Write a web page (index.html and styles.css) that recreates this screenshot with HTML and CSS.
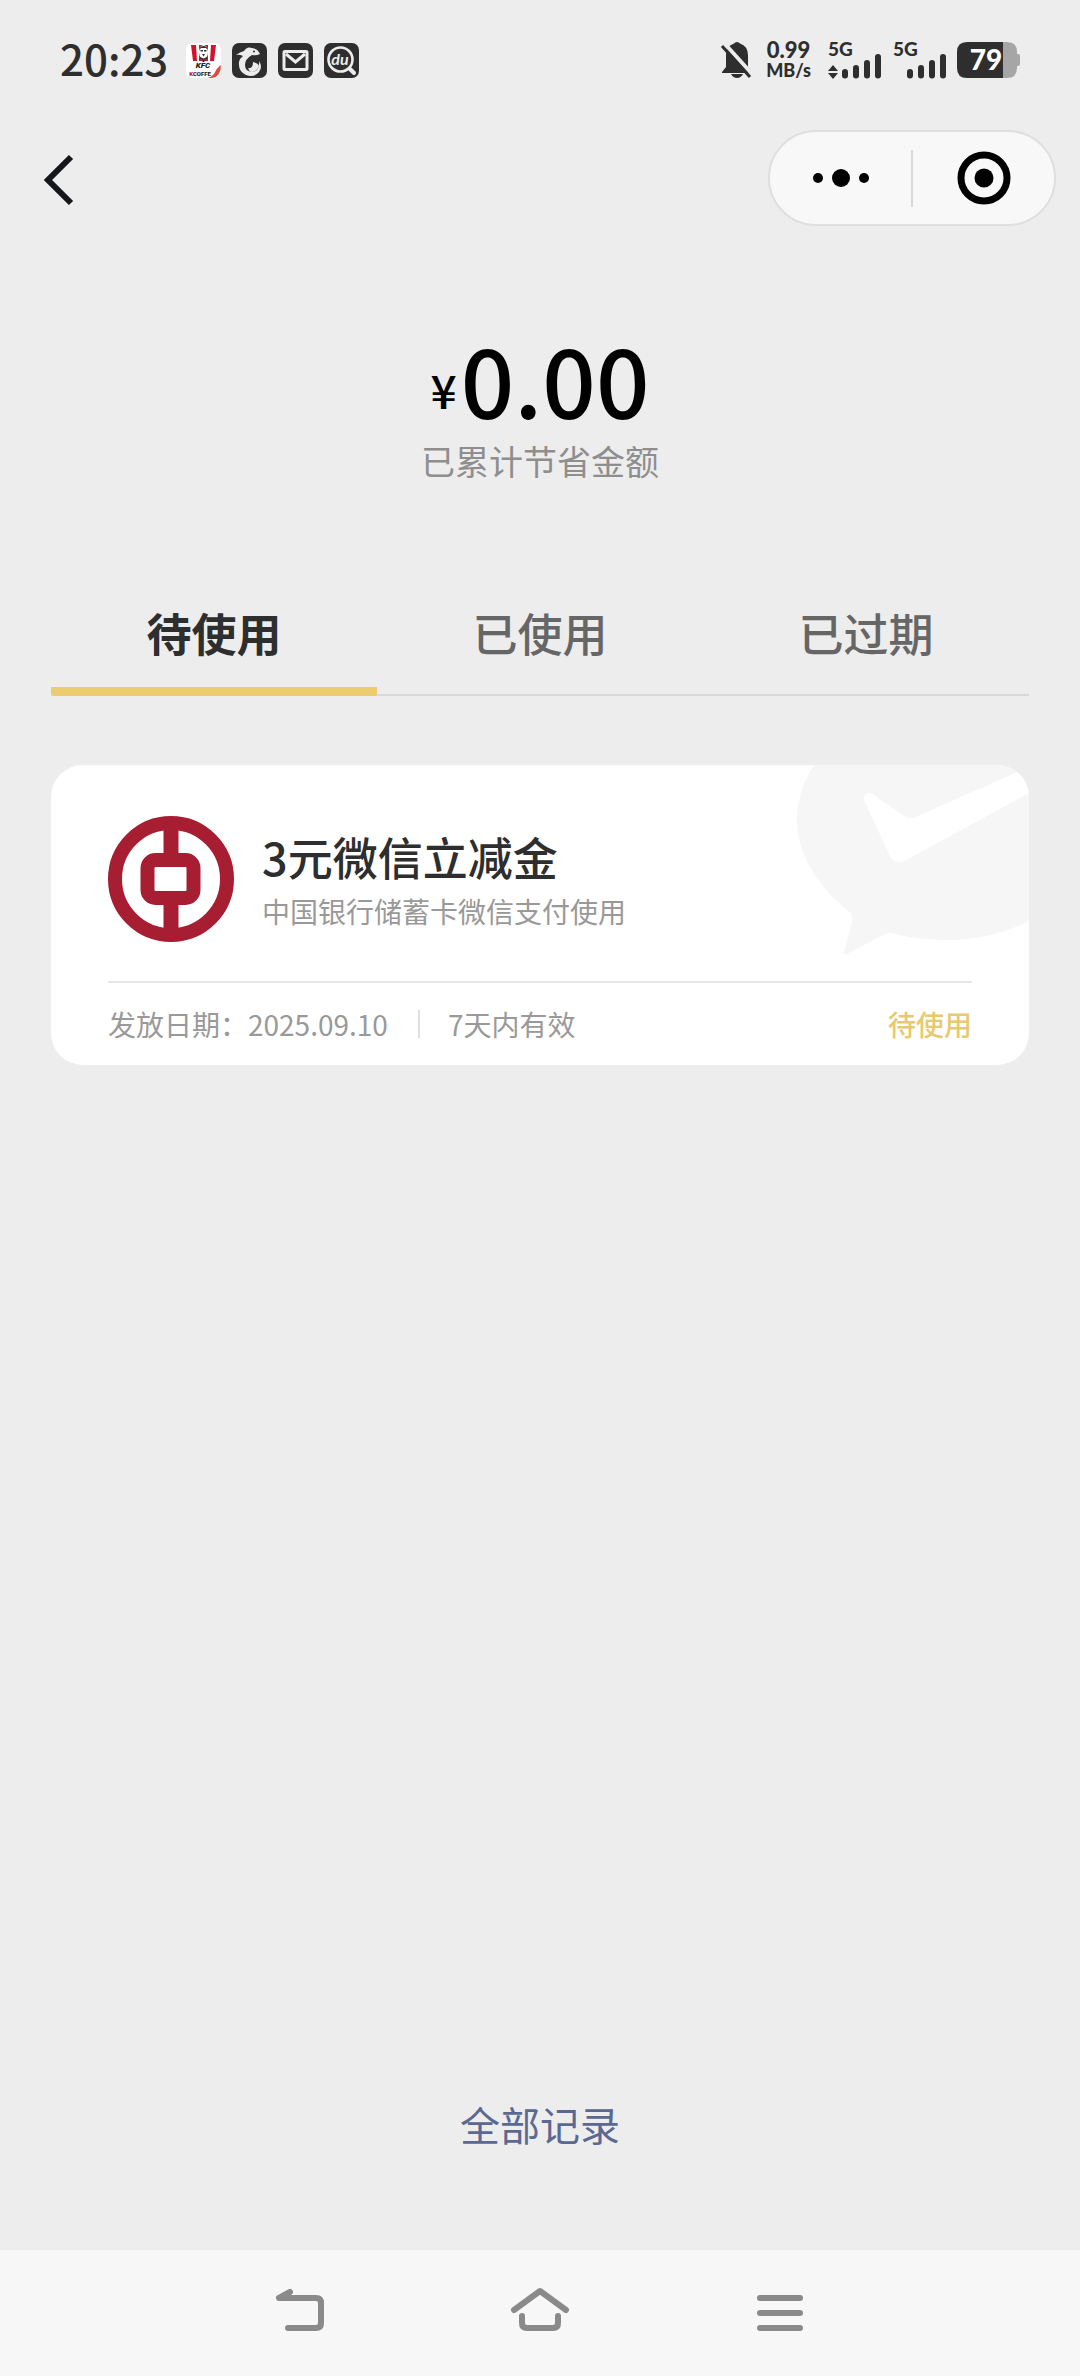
FILE: index.html
```html
<!DOCTYPE html>
<html lang="zh-CN">
<head>
<meta charset="utf-8">
<meta name="viewport" content="width=device-width, initial-scale=1">
<title>立减金</title>
<link rel="stylesheet" href="styles.css">
</head>
<body>
<div class="screen">
  <header class="status">
    <div class="status-left">
      <time class="clock">20:23</time>
      <div class="apps">
        <svg class="app" viewBox="0 0 35 35" aria-hidden="true">
          <rect width="35" height="35" rx="7" fill="#fff"/>
          <path d="M5 2H30L28 18H7Z" fill="#d3122e"/>
          <path d="M10 2h3v16h-2zM22 2h3l-1 16h-2z" fill="#fff"/>
          <ellipse cx="17.500" cy="9" rx="4.500" ry="7" fill="#fff"/>
          <path d="M13.500 7q0-4 4-4t4 4l-1.500-2h-5zM14.500 7h2.500v1.500h-2.500zM18 7h2.500v1.500h-2.500zM16 11h3l-1.500 2.500zM14 14l3.500 1.500L21 14v2l-2.500 0v3h-2v-3L14 16z" fill="#333"/>
          <text x="17" y="25" class="kfc">KFC</text>
          <text x="14" y="33" class="coffee"><tspan fill="#d3122e">K</tspan>COFFE</text>
          <path d="M35 22q0 12-9 13h-4q6-2 8-8 2-3 5-5z" fill="#e04a40"/>
        </svg>
        <svg class="app" viewBox="0 0 35 35" aria-hidden="true">
          <rect width="35" height="35" rx="7" fill="#2e2e2e"/>
          <path d="M4 12Q8 9 12 8Q15 3 20 5Q26 6 28 11Q24 13 20 12Q13 16 13 22Q13 29 21 29Q28 27 27 18Q31 24 27 29Q22 35 14 32Q6 28 7 19Q8 15 11 13Q7 11 4 12Z" fill="#ececec"/>
          <path d="M16 25q5 1 5-6 5 1 6 4-2 6-8 6-2-1-3-4z" fill="#ececec"/>
          <circle cx="22" cy="8.500" r="1" fill="#2e2e2e"/>
        </svg>
        <svg class="app" viewBox="0 0 35 35" aria-hidden="true">
          <rect width="35" height="35" rx="7" fill="#2e2e2e"/>
          <rect x="6" y="8.500" width="23" height="18" rx="1" fill="none" stroke="#ececec" stroke-width="3"/>
          <path d="M8 11l9.500 8 9.500-8" fill="none" stroke="#ececec" stroke-width="3"/>
        </svg>
        <svg class="app" viewBox="0 0 35 35" aria-hidden="true">
          <rect width="35" height="35" rx="7" fill="#2e2e2e"/>
          <circle cx="16.500" cy="16.500" r="12" fill="none" stroke="#ececec" stroke-width="2.600"/>
          <path d="M26 26l4 4" stroke="#ececec" stroke-width="4" stroke-linecap="round"/>
          <text x="16" y="22" class="du">du</text>
        </svg>
      </div>
    </div>
    <div class="status-right">
      <svg class="bell" viewBox="0 0 32 37" aria-hidden="true">
        <path d="M16 0q2 0 3 1.500 8 2.500 8 12V25l4 5v1H1v-1l4-5V13Q5 4 13 1.500 14 0 16 0zM10 32h12q-2 4-6 4t-6-4z" fill="#2e2e2e"/>
        <path d="M4 2L32 33" stroke="#ececec" stroke-width="4"/>
        <path d="M1 4L29 35" stroke="#2e2e2e" stroke-width="3"/>
      </svg>
      <div class="speed"><span class="rate">0.99</span><span class="unit">MB/s</span></div>
      <svg class="signal" viewBox="0 0 56 37" aria-hidden="true">
        <text x="1" y="14" class="net">5G</text>
        <path d="M1 29l5-6 5 6zM1 31h10l-5 6z" fill="#2e2e2e"/>
        <path d="M18 30v3.500M29 26v7.500M40 21v12.500M51 15v18.500" stroke="#2e2e2e" stroke-width="6" stroke-linecap="round"/>
      </svg>
      <svg class="signal" viewBox="0 0 56 37" aria-hidden="true">
        <text x="1" y="14" class="net">5G</text>
        <path d="M18 30v3.500M29 26v7.500M40 21v12.500M51 15v18.500" stroke="#2e2e2e" stroke-width="6" stroke-linecap="round"/>
      </svg>
      <svg class="battery" viewBox="0 0 63 36" aria-label="79">
        <path d="M46 0h4q10 0 10 10v2h1q2 0 2 2v8q0 2-2 2h-1v2q0 10-10 10h-4z" fill="#a6a6a6"/>
        <path d="M46 0H10Q0 0 0 10v16q0 10 10 10h36z" fill="#2e2e2e"/>
        <text x="29" y="28" class="level">79</text>
      </svg>
    </div>
  </header>

  <nav class="topbar">
    <button class="back" aria-label="返回">
      <svg class="back-icon" viewBox="0 0 32 52" aria-hidden="true"><path d="M29 3L6 26l23 23" fill="none" stroke="#15161a" stroke-width="6"/></svg>
    </button>
    <div class="capsule">
      <button class="cap-btn" aria-label="更多">
        <svg class="dots" viewBox="0 0 58 20" aria-hidden="true"><circle cx="6" cy="10" r="5"/><circle cx="29" cy="10" r="9"/><circle cx="52" cy="10" r="5"/></svg>
      </button>
      <span class="cap-line"></span>
      <button class="cap-btn" aria-label="关闭">
        <svg class="target" viewBox="0 0 54 54" aria-hidden="true"><circle cx="27" cy="27" r="23" fill="none" stroke="#000" stroke-width="7"/><circle cx="27" cy="27" r="9.500"/></svg>
      </button>
    </div>
  </nav>

  <main class="content">
    <section class="summary">
      <p class="amount"><span class="yen">¥</span><span class="value">0.00</span></p>
      <p class="caption">已累计节省金额</p>
    </section>

    <div class="tabs" role="tablist">
      <button class="tab active" role="tab" aria-selected="true">待使用</button>
      <button class="tab" role="tab" aria-selected="false">已使用</button>
      <button class="tab" role="tab" aria-selected="false">已过期</button>
    </div>

    <article class="card">
      <svg class="watermark" viewBox="0 0 232 190" aria-hidden="true">
        <path d="M17 0Q0 26 0 56C1 94 24 125 54 148Q56 151 55 157L47 187Q47 190 50 189L88 169Q93 167 98 169Q172 186 232 156V0Z" fill="#f6f6f6"/>
        <path d="M67 35Q66 27 74 28L107 51Q113 55 121 51L220 7L232 0V28L111 94Q98 102 92 89Z" fill="#fff"/>
      </svg>
      <div class="offer">
        <svg class="logo" viewBox="0 0 126 126" aria-hidden="true">
          <circle cx="63" cy="63" r="56" fill="none" stroke="#a71e32" stroke-width="14"/>
          <path d="M63 8v36M63 82v36" stroke="#a71e32" stroke-width="15"/>
          <rect x="39.500" y="44" width="46" height="38" rx="8" fill="none" stroke="#a71e32" stroke-width="14"/>
        </svg>
        <div class="offer-text">
          <h2 class="title">3元微信立减金</h2>
          <p class="desc">中国银行储蓄卡微信支付使用</p>
        </div>
      </div>
      <footer class="meta">
        <span class="date">发放日期：2025.09.10</span>
        <span class="valid">7天内有效</span>
        <span class="state">待使用</span>
      </footer>
    </article>

    <a class="records" href="#records">全部记录</a>
  </main>

  <nav class="sysbar">
    <button class="sys first" aria-label="返回">
      <svg class="sys-icon" viewBox="0 0 60 46"><path d="M20 5L9 11H46q5 0 5 5V36q0 5-5 5H18"/></svg>
    </button>
    <button class="sys" aria-label="主页">
      <svg class="sys-icon" viewBox="0 0 60 46"><path d="M4 23L30 4l26 19M12 29v7q0 5 5 5h26q5 0 5-5v-7"/></svg>
    </button>
    <button class="sys" aria-label="最近任务">
      <svg class="sys-icon" viewBox="0 0 60 46"><path d="M10 11h40M10 26h40M10 41h40"/></svg>
    </button>
  </nav>
</div>
</body>
</html>
```
FILE: styles.css
```css
* { box-sizing: border-box; }

body {
  margin: 0;
  background: #ededed;
  color: #2e2e2e;
  font-family: "Noto Sans CJK SC", "Noto Sans", sans-serif;
}

p, h2 { margin: 0; }

button {
  padding: 0;
  border: 0;
  background: none;
  color: inherit;
  font: inherit;
}

svg { display: block; overflow: visible; }

.screen {
  display: flex;
  flex-direction: column;
  min-height: 100vh;
}

/* status bar */
.status {
  display: flex;
  justify-content: space-between;
  align-items: center;
  height: 120px;
  padding: 0 60px;
}

.status-left, .status-right { display: flex; align-items: center; }
.status-left { gap: 18px; }
.clock { padding-bottom: 4px; font-size: 42px; font-weight: 500; line-height: 48px; }
.apps { display: flex; gap: 11px; }
.app { width: 35px; height: 35px; }
.kfc { font: italic 900 8px Roboto, sans-serif; text-anchor: middle; fill: #222; }
.coffee { font: 900 6px Roboto, sans-serif; text-anchor: middle; fill: #222; }
.du { font: italic 700 16px Lato, sans-serif; text-anchor: middle; fill: #ececec; }

.bell { width: 32px; height: 37px; }
.speed {
  display: flex;
  flex-direction: column;
  align-items: center;
  margin: 0 16px 0 13px;
  font-family: Lato, sans-serif;
  font-weight: 900;
}
.rate { font-size: 22px; line-height: 20px; }
.unit { font-size: 18px; line-height: 20px; }
.signal { width: 56px; height: 37px; margin-right: 9px; }
.net { font: 900 19px Lato, sans-serif; fill: #2e2e2e; }
.battery { width: 63px; height: 36px; }
.level { font: 900 28px Lato, sans-serif; text-anchor: middle; fill: #fff; }

/* navigation */
.topbar {
  display: flex;
  justify-content: space-between;
  align-items: center;
  padding: 10px 24px 0 42px;
}
.back { padding-top: 4px; }
.back-icon { width: 32px; height: 52px; }
.capsule {
  display: flex;
  align-items: center;
  width: 288px;
  height: 96px;
  border: 2px solid #dfdfdf;
  border-radius: 48px;
  background: #f8f8f8;
}
.cap-btn { display: grid; flex: 1; place-items: center; height: 100%; }
.cap-line { width: 2px; height: 57px; background: #d8d8d8; }
.dots { width: 58px; height: 20px; }
.target { width: 54px; height: 54px; }

/* page content */
.content {
  display: flex;
  flex: 1;
  flex-direction: column;
  padding: 102px 51px 0;
}

.summary { text-align: center; }
.amount {
  display: flex;
  justify-content: center;
  align-items: flex-end;
  gap: 4px;
  color: #000;
  font-weight: 500;
}
.yen { font-size: 46px; line-height: 78px; }
.value { font-size: 94px; line-height: 100px; }
.caption { margin-top: 13px; color: #8e8e8e; font-size: 34px; line-height: 40px; }

.tabs {
  display: flex;
  margin-top: 103px;
  border-bottom: 2px solid #d8d8d8;
}
.tab {
  flex: 1;
  height: 112px;
  margin-bottom: -2px;
  padding-bottom: 6px;
  border-bottom: 9px solid transparent;
  color: #666;
  font-size: 45px;
  font-weight: 500;
  line-height: 60px;
}
.tab.active {
  border-bottom-color: #edcb6f;
  border-radius: 3px;
  color: #2e2e2e;
  font-weight: 700;
}

.card {
  position: relative;
  overflow: hidden;
  margin-top: 69px;
  padding: 51px 57px 0;
  border-radius: 32px;
  background: #fff;
}
.watermark { position: absolute; top: 0; right: 0; width: 232px; height: 190px; }
.offer { display: flex; align-items: center; gap: 28px; padding-bottom: 39px; }
.logo { width: 126px; height: 126px; }
.title { font-size: 45px; font-weight: 500; line-height: 60px; }
.desc { margin-top: 4px; color: #999; font-size: 28px; line-height: 40px; }
.meta {
  display: flex;
  align-items: center;
  height: 84px;
  border-top: 2px solid #e6e6e6;
  color: #999;
  font-size: 28px;
  line-height: 28px;
}
.valid { margin-left: 30px; padding-left: 28px; border-left: 2px solid #e0e0e0; }
.state { margin-left: auto; color: #e7c96f; font-weight: 500; }

.records {
  align-self: center;
  margin: auto 0 96px;
  color: #5b6891;
  font-size: 40px;
  line-height: 60px;
  text-decoration: none;
}

/* system navigation */
.sysbar {
  display: grid;
  grid-template-columns: 3fr repeat(3, 4fr) 3fr;
  height: 126px;
  padding-bottom: 6px;
  background: #f7f7f7;
}
.sys { display: grid; place-items: center; }
.sys.first { grid-column: 2; }
.sys-icon {
  width: 60px;
  height: 46px;
  fill: none;
  stroke: #8a8a8a;
  stroke-width: 6;
  stroke-linecap: round;
  stroke-linejoin: round;
}
```
